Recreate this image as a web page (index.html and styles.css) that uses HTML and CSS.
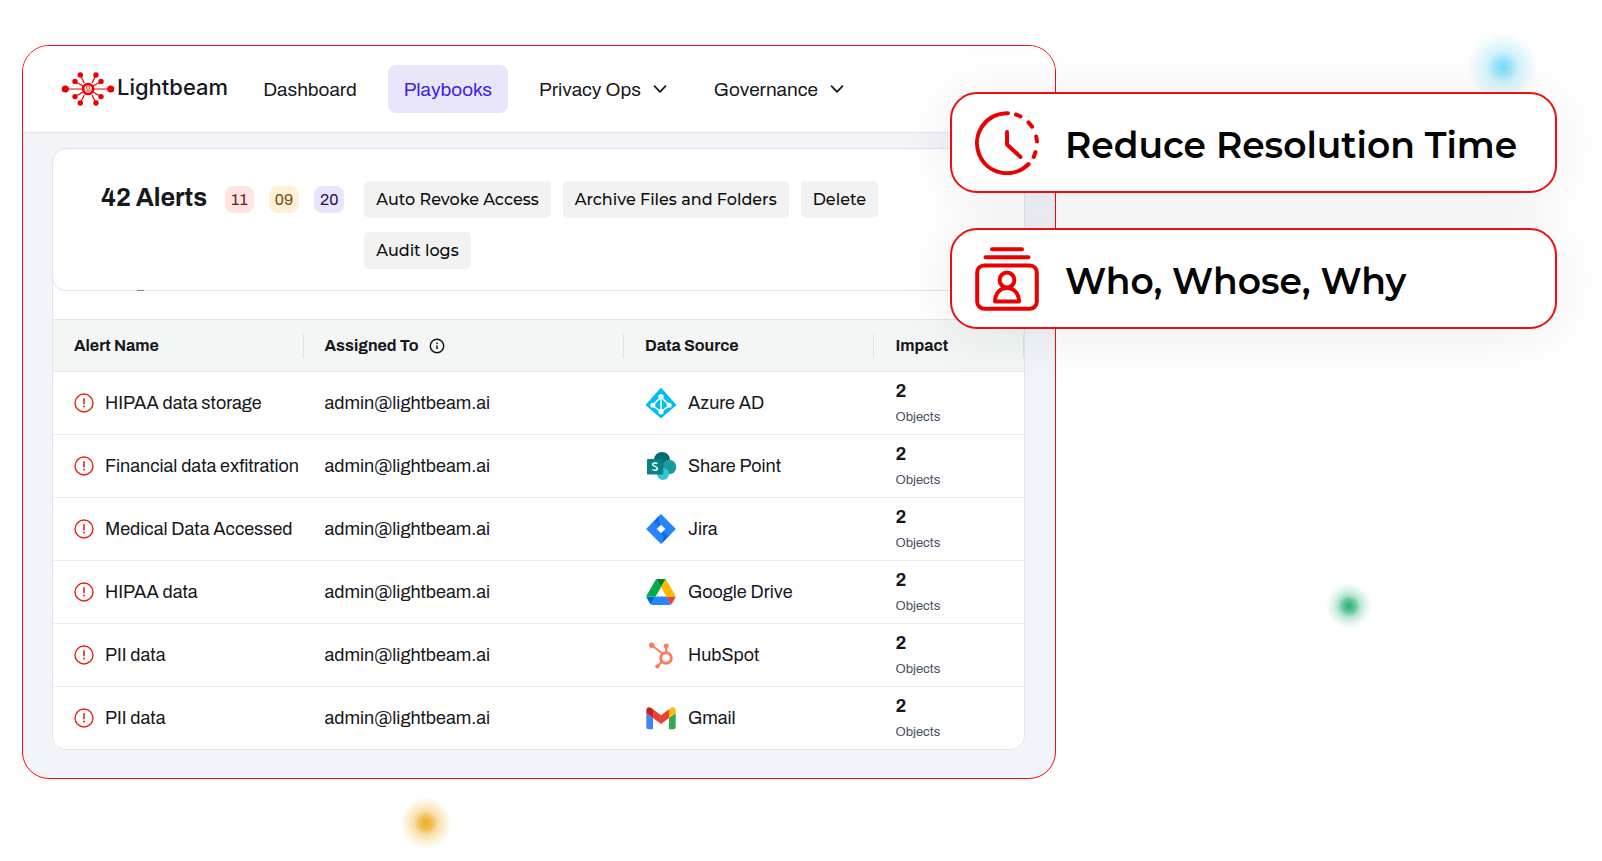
FILE: index.html
```html
<!DOCTYPE html>
<html lang="en">
<head>
<meta charset="utf-8">
<meta name="viewport" content="width=device-width, initial-scale=1">
<title>Lightbeam Playbooks</title>
<link rel="stylesheet" href="styles.css">
</head>
<body>
<svg class="sprite" aria-hidden="true">
  <symbol id="alert" viewBox="0 0 20 20"><circle cx="10" cy="10" r="9" fill="none" stroke="currentColor" stroke-width="1.4"/><path d="M10 5.8v5" fill="none" stroke="currentColor" stroke-width="1.6" stroke-linecap="round"/><circle cx="10" cy="13.6" r="1" fill="currentColor"/></symbol>
  <symbol id="chevron" viewBox="0 0 14 14"><path d="M1.5 4.2 7 9.8l5.500-5.600" fill="none" stroke="currentColor" stroke-width="1.8" stroke-linecap="round" stroke-linejoin="round"/></symbol>
</svg>
<main class="stage">
  <span class="glow glow-blue"></span>
  <span class="glow glow-green"></span>
  <span class="glow glow-amber"></span>

  <section class="panel">
    <header class="topbar">
      <a class="brand" href="#">
        <svg class="brand-mark" viewBox="0 0 54 36" aria-hidden="true">
          <g stroke="#eb0000" stroke-width="1.2"><path d="M4 18h46M19.300 4l4 8M35 4l-4 8M14 10.400l8 4.600M40 10.400l-8 4.600M14 25.600l8-4.600M40 25.600l-8-4.600M19.300 32l4-8M35 32l-4-8"/></g>
          <g fill="#eb0000"><circle cx="4.300" cy="18" r="3.600"/><circle cx="49.700" cy="18" r="3.600"/><circle cx="19.300" cy="4" r="2.700"/><circle cx="35" cy="4" r="2.700"/><circle cx="14" cy="10.400" r="2.700"/><circle cx="40" cy="10.400" r="2.700"/><circle cx="14" cy="25.600" r="2.700"/><circle cx="40" cy="25.600" r="2.700"/><circle cx="19.300" cy="32" r="2.700"/><circle cx="35" cy="32" r="2.700"/></g>
          <circle cx="27.100" cy="18" r="5" fill="#fff" stroke="#eb0000" stroke-width="2.600"/>
          <circle cx="27.100" cy="16.600" r="1.700" fill="none" stroke="#eb0000" stroke-width=".8"/><path d="M24 18.500c1.500 2.200 4.700 2.200 6.200 0" fill="none" stroke="#eb0000"/>
        </svg>
        <span>Lightbeam</span>
      </a>
      <nav class="nav">
        <a class="nav-link" href="#">Dashboard</a>
        <a class="nav-link active" href="#">Playbooks</a>
        <button class="nav-link" type="button">Privacy Ops <svg class="chevron" aria-hidden="true"><use href="#chevron"/></svg></button>
        <button class="nav-link" type="button">Governance <svg class="chevron" aria-hidden="true"><use href="#chevron"/></svg></button>
      </nav>
    </header>

    <div class="content">
      <div class="board">
        <div class="summary">
          <h1>42 Alerts</h1>
          <div class="badges">
            <span class="badge high">11</span>
            <span class="badge medium">09</span>
            <span class="badge low">20</span>
          </div>
          <div class="actions">
            <button type="button">Auto Revoke Access</button>
            <button type="button">Archive Files and Folders</button>
            <button type="button">Delete</button>
            <button type="button">Audit logs</button>
          </div>
        </div>
        <div class="strip"><span class="strip-mark"></span></div>
        <table class="alerts">
          <colgroup><col class="col-name"><col class="col-user"><col class="col-source"><col class="col-impact"></colgroup>
          <thead>
            <tr>
              <th scope="col"><div class="head">Alert Name</div></th>
              <th scope="col"><div class="head">Assigned To <svg class="info" viewBox="0 0 16 16" aria-hidden="true"><circle cx="8" cy="8" r="6.700" fill="none" stroke="currentColor" stroke-width="1.500"/><path d="M8 7.500v3.500" stroke="currentColor" stroke-width="1.500"/><circle cx="8" cy="5.300" r=".9" fill="currentColor"/></svg></div></th>
              <th scope="col"><div class="head">Data Source</div></th>
              <th scope="col"><div class="head">Impact</div></th>
            </tr>
          </thead>
          <tbody>
            <tr>
              <td><div class="cell"><svg class="alert" aria-hidden="true"><use href="#alert"/></svg>HIPAA data storage</div></td>
              <td>admin@lightbeam.ai</td>
              <td><div class="cell"><svg class="logo" viewBox="0 0 32 32" aria-hidden="true"><path d="M16 .5 31.500 18 16 31.500.5 18z" fill="#00bef2"/><path d="M16 10 7.500 18.500 16 24.500l8.500-6zM16 9v16" fill="none" stroke="#fff" stroke-width="1.500"/><circle cx="16" cy="9.700" r="2.700" fill="#fff"/><circle cx="7.800" cy="18.300" r="2.500" fill="#fff"/><circle cx="24.200" cy="18.300" r="2.500" fill="#fff"/><circle cx="16" cy="24.700" r="2.600" fill="#fff"/></svg>Azure AD</div></td>
              <td><div class="impact"><strong>2</strong><span>Objects</span></div></td>
            </tr>
            <tr>
              <td><div class="cell"><svg class="alert" aria-hidden="true"><use href="#alert"/></svg>Financial data exfitration</div></td>
              <td>admin@lightbeam.ai</td>
              <td><div class="cell"><svg class="logo" viewBox="0 0 32 32" aria-hidden="true"><circle cx="17" cy="10" r="8" fill="#036c70"/><circle cx="24" cy="17" r="7.300" fill="#1a9ba1"/><circle cx="18" cy="24" r="6" fill="#37c6d0"/><path d="M9 9h9.500v15.500H12z" fill="#025b5e" opacity=".45"/><rect x="2" y="9" width="15.600" height="15.400" rx="1" fill="#058387"/><path d="M12.400 13.500c-1.300-.8-4.800-1-4.800 1 0 2.300 4.900 1.500 4.900 4 0 2.100-3.700 2-5.200 1" fill="none" stroke="#fff" stroke-width="1.500"/></svg>Share Point</div></td>
              <td><div class="impact"><strong>2</strong><span>Objects</span></div></td>
            </tr>
            <tr>
              <td><div class="cell"><svg class="alert" aria-hidden="true"><use href="#alert"/></svg>Medical Data Accessed</div></td>
              <td>admin@lightbeam.ai</td>
              <td><div class="cell"><svg class="logo" viewBox="0 0 32 32" aria-hidden="true"><defs><linearGradient id="j1" x1="15" y1="4" x2="8" y2="11" gradientUnits="userSpaceOnUse"><stop offset=".1" stop-color="#0052cc"/><stop offset="1" stop-color="#2684ff"/></linearGradient><linearGradient id="j2" x1="17" y1="28" x2="24" y2="21" gradientUnits="userSpaceOnUse"><stop offset=".1" stop-color="#0052cc"/><stop offset="1" stop-color="#2684ff"/></linearGradient></defs><path d="M16 1 30.200 15.200q.8.800 0 1.600L16 31 1.800 16.800q-.8-.8 0-1.600z" fill="#2684ff"/><path d="M16 1C12.500 4.500 12.500 8.500 16 11.700L11.700 16 5.600 11.400z" fill="url(#j1)"/><path d="M16 31c3.500-3.500 3.500-7.500 0-10.700L20.300 16l6.100 4.600z" fill="url(#j2)"/><path d="m16 11.700 4.300 4.300-4.300 4.300-4.300-4.300z" fill="#fff"/></svg>Jira</div></td>
              <td><div class="impact"><strong>2</strong><span>Objects</span></div></td>
            </tr>
            <tr>
              <td><div class="cell"><svg class="alert" aria-hidden="true"><use href="#alert"/></svg>HIPAA data</div></td>
              <td>admin@lightbeam.ai</td>
              <td><div class="cell"><svg class="logo drive" viewBox="-4.300 -8.700 96 96" aria-hidden="true"><path d="m6.600 66.850 3.850 6.650c.8 1.400 1.950 2.500 3.300 3.300L27.500 53H0c0 1.550.4 3.100 1.200 4.500z" fill="#0066da"/><path d="M43.650 25 29.900 1.200c-1.350.8-2.500 1.900-3.300 3.300L1.200 48.500A9 9 0 0 0 0 53h27.500z" fill="#00ac47"/><path d="M73.550 76.800c1.350-.8 2.500-1.900 3.300-3.300l1.600-2.750L86.100 57.500c.8-1.400 1.200-2.950 1.200-4.500H59.800l5.850 11.500z" fill="#ea4335"/><path d="M43.650 25 57.400 1.200C56.050.4 54.500 0 52.900 0H34.400c-1.600 0-3.150.45-4.500 1.200z" fill="#00832d"/><path d="M59.800 53H27.500L13.750 76.800c1.350.8 2.900 1.200 4.500 1.200h50.800c1.600 0 3.150-.45 4.500-1.200z" fill="#2684fc"/><path d="M73.400 26.500 60.700 4.500c-.8-1.400-1.950-2.500-3.300-3.300L43.650 25 59.800 53h27.450c0-1.550-.4-3.100-1.200-4.500z" fill="#ffba00"/></svg>Google Drive</div></td>
              <td><div class="impact"><strong>2</strong><span>Objects</span></div></td>
            </tr>
            <tr>
              <td><div class="cell"><svg class="alert" aria-hidden="true"><use href="#alert"/></svg>PII data</div></td>
              <td>admin@lightbeam.ai</td>
              <td><div class="cell"><svg class="logo" viewBox="0 0 32 32" aria-hidden="true"><g fill="none" stroke="#ff7a59"><circle cx="21" cy="19" r="5.300" stroke-width="3"/><path d="M7 6.500 17.500 14.500M21.200 7v6.500M17 22.500 13 27" stroke-width="2"/></g><g fill="#ff7a59"><circle cx="6.700" cy="6.200" r="2.700"/><circle cx="21.200" cy="7" r="2.500"/><circle cx="12.400" cy="27.300" r="2.100"/></g></svg>HubSpot</div></td>
              <td><div class="impact"><strong>2</strong><span>Objects</span></div></td>
            </tr>
            <tr>
              <td><div class="cell"><svg class="alert" aria-hidden="true"><use href="#alert"/></svg>PII data</div></td>
              <td>admin@lightbeam.ai</td>
              <td><div class="cell"><svg class="logo" viewBox="48 26 96 96" aria-hidden="true"><path fill="#4285f4" d="M58 108h14V74L52 59v43c0 3.320 2.690 6 6 6"/><path fill="#34a853" d="M120 108h14c3.320 0 6-2.690 6-6V59l-20 15"/><path fill="#fbbc04" d="M120 48v26l20-15v-8c0-7.420-8.470-11.650-14.400-7.200"/><path fill="#ea4335" d="M72 74V48l24 18 24-18v26L96 92"/><path fill="#c5221f" d="M52 51v8l20 15V48l-5.600-4.200c-5.940-4.450-14.400-.22-14.400 7.200"/></svg>Gmail</div></td>
              <td><div class="impact"><strong>2</strong><span>Objects</span></div></td>
            </tr>
          </tbody>
        </table>
      </div>
    </div>
  </section>

  <aside class="callouts">
    <div class="callout">
      <svg viewBox="0 0 64 64" aria-hidden="true" fill="none" stroke="#eb0000" stroke-width="4" stroke-linecap="round" stroke-linejoin="round"><path d="M33 2.200A30 30 0 1 0 53.600 53"/><path d="M41 3.600 45.500 5.400M53.500 11.400 57 15.600M61.200 25.500 62 30.500M60.600 41 58.700 46"/><path d="M32 21v12.500L45.500 46"/></svg>
      <span>Reduce Resolution Time</span>
    </div>
    <div class="callout">
      <svg viewBox="0 0 64 64" aria-hidden="true" fill="none" stroke="#eb0000" stroke-width="4" stroke-linecap="round" stroke-linejoin="round"><path d="M17 2.200h30M10.500 10.200h43"/><rect x="2.200" y="18.400" width="59.600" height="43.400" rx="7"/><circle cx="32" cy="33" r="7.400"/><path d="M20 54.500c0-8 5-13.500 12-13.500s12 5.500 12 13.500z"/></svg>
      <span>Who, Whose, Why</span>
    </div>
  </aside>
</main>
</body>
</html>
```
FILE: styles.css
```css
* { box-sizing: border-box; }

body {
  margin: 0;
  background: #fff;
  color: #16181d;
  font-family: Archivo, "Liberation Sans", Arial, sans-serif;
  font-size: 18px;
}

button { font: inherit; color: inherit; border: 0; background: none; cursor: pointer; }
a { color: inherit; text-decoration: none; }
.sprite { display: none; }

.stage {
  position: relative;
  display: grid;
  grid-template-columns: 1034fr 500fr;
  padding: 45px 46px 82px 22px;
}

/* Ambient light dots */
.glow { position: absolute; border-radius: 50%; transform: translate(-50%, -50%); }
.glow-blue {
  left: 93.8%; top: 67px; width: 70px; height: 70px;
  background: radial-gradient(closest-side, #7adcfa 0, #a9e8fb 28%, #d4f3fd 46%, #e6f8fe 70%, #fff 100%);
}
.glow-green {
  left: 84.2%; top: 606px; width: 46px; height: 46px;
  background: radial-gradient(closest-side, #27b276 0, #66c89d 28%, #b4e4cf 48%, #dff4ea 72%, #fff 100%);
}
.glow-amber {
  left: 26.6%; top: 823px; width: 52px; height: 52px;
  background: radial-gradient(closest-side, #ecab22 0, #f1c35f 28%, #f7dfa9 46%, #fbf0d5 72%, #fff 100%);
}

/* Application window */
.panel {
  border: 1px solid #f80c0c;
  border-radius: 27px;
  overflow: hidden;
  background: #f3f4f9;
}

.topbar {
  display: flex;
  align-items: center;
  height: 87px;
  padding: 0 38px;
  background: #fff;
  border-bottom: 1px solid #e2e5ea;
}
.brand {
  display: flex;
  align-items: center;
  gap: 2px;
  margin-right: 19px;
  font: 500 22px/28px Inter, sans-serif;
}
.brand span { padding-bottom: 4px; }
.brand-mark { width: 54px; height: 36px; }
.nav { display: flex; align-items: center; gap: 15px; }
.nav-link {
  display: flex;
  align-items: center;
  gap: 12px;
  height: 48px;
  padding: 0 16px;
  border-radius: 8px;
  font-size: 19px;
  white-space: nowrap;
}
.nav-link.active { background: #e9e6fc; color: #3c1ee6; }
.chevron { width: 14px; height: 14px; }

.content { padding: 15px 30px 28px 29px; }

/* Alert board */
.board {
  border: 1px solid #e1e5ea;
  border-radius: 14px;
  background: #fff;
}
.summary {
  display: flex;
  align-items: flex-start;
  margin: -1px;
  min-height: 143px;
  padding: 32px 46px 20px 48px;
  border: 1px solid #e1e5ea;
  border-radius: 14px;
}
h1 { margin: 0; font-size: 25px; line-height: 34px; white-space: nowrap; }
.badges { display: flex; gap: 15px; margin: 5px 20px 0 18px; }
.badge {
  height: 27px;
  padding: 0 6px;
  border-radius: 8px;
  font-size: 16px;
  line-height: 27px;
}
.badge.high { background: #ffe4e1; color: #6b1a10; }
.badge.medium { background: #fff0d8; color: #7a4b05; }
.badge.low { background: #e9e6fc; color: #231065; }
.actions { display: flex; flex-wrap: wrap; gap: 14px 12px; flex: 1; }
.actions button {
  height: 37px;
  padding: 0 12px;
  border-radius: 5px;
  background: #f2f2f2;
  color: #0c0c0c;
  font: 500 16px/20px Montserrat, Inter, sans-serif;
}

.strip { height: 29px; padding-left: 84px; }
.strip-mark { display: block; width: 7px; height: 1px; background: #7c7f83; }

.alerts {
  width: 100%;
  table-layout: fixed;
  border-collapse: separate;
  border-spacing: 0;
}
.col-name { width: 25.8%; }
.col-user { width: 33%; }
.col-source { width: 25.8%; }
.alerts th {
  height: 53px;
  padding: 0;
  background: #f4f6f6;
  border-top: 1px solid #e1e5ea;
  border-bottom: 1px solid #e6e9eb;
  font-size: 16px;
  text-align: left;
}
.head {
  display: flex;
  align-items: center;
  gap: 10px;
  height: 24px;
  padding-left: 21px;
  border-right: 1px solid #dfe3e8;
}
.info { width: 16px; height: 16px; }
.alerts td {
  height: 63px;
  padding: 0 0 0 21px;
  border-bottom: 1px solid #ebedef;
  white-space: nowrap;
}
.alerts tbody tr:last-child td { height: 62px; border-bottom: 0; }
.cell { display: flex; align-items: center; gap: 11px; }
.alert { width: 20px; height: 20px; color: #e8230f; }
.logo { width: 32px; height: 32px; }
.impact { display: flex; flex-direction: column; gap: 6px; }
.impact strong { line-height: 22px; }
.impact span { font-size: 13px; line-height: 18px; color: #4b5165; }

/* Feature callouts over the window edge */
.callouts {
  position: absolute;
  top: 92px;
  left: 59.3%;
  right: 45px;
  display: grid;
  grid-template-columns: minmax(0, 1fr);
  gap: 35px;
}
.callout {
  display: flex;
  align-items: center;
  gap: 26px;
  min-height: 101px;
  padding: 0 23px;
  border: 2px solid #eb1010;
  border-radius: 27px;
  background: #fff;
  color: #050505;
  font: 600 36px/46px Montserrat, Inter, sans-serif;
  white-space: nowrap;
  box-shadow: 0 4px 60px rgba(0, 0, 0, .08);
}
.callout svg { flex: none; width: 64px; height: 64px; }
.callout span { padding-top: 4px; }
```
